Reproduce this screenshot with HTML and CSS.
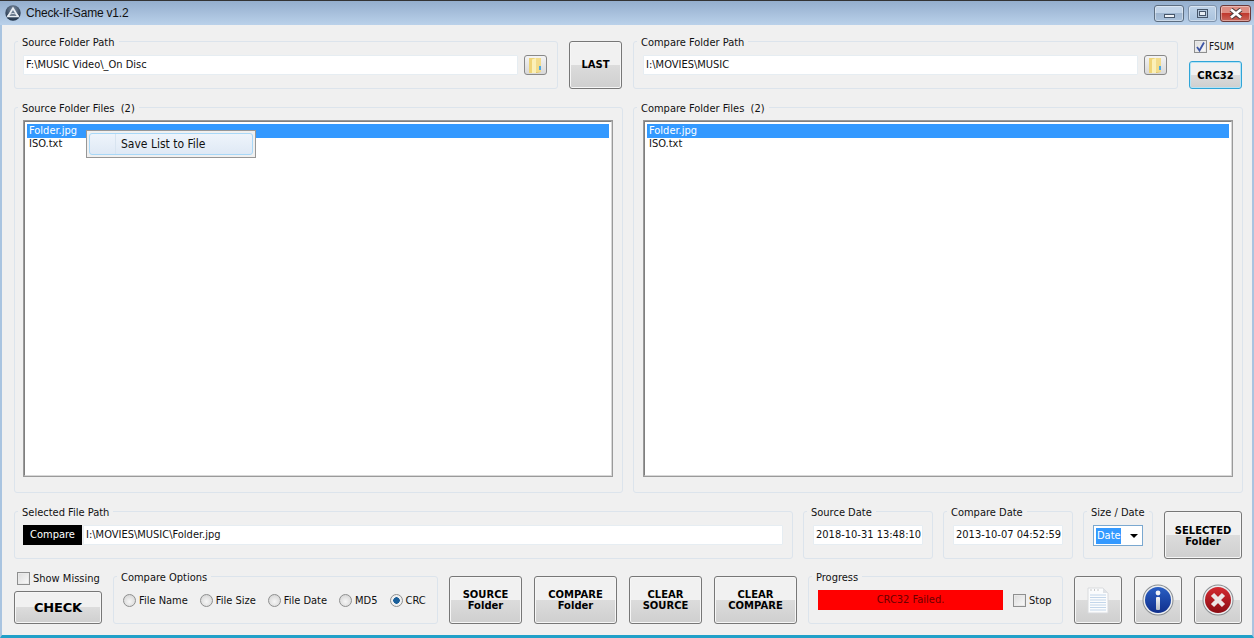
FILE: index.html
```html
<!DOCTYPE html>
<html lang="en">
<head>
<meta charset="utf-8">
<title>Check-If-Same v1.2</title>
<link rel="stylesheet" href="styles.css">
</head>
<body>
<div class="window">
  <header class="titlebar">
    <svg class="app-icon" viewBox="0 0 16 16"><defs><radialGradient id="ai" cx="50%" cy="30%" r="70%"><stop offset="0" stop-color="#7d8ea3"/><stop offset="1" stop-color="#1d2f45"/></radialGradient></defs><circle cx="8" cy="8" r="7.7" fill="url(#ai)"/><path d="M8 3.2 13 11.500H3Z" fill="none" stroke="#e8edf2" stroke-width="1.700"/><path d="M2.500 10.500C6 8 10 8 13.500 10.500" fill="none" stroke="#e8edf2" stroke-width="1"/></svg>
    <span class="title-text">Check-If-Same v1.2</span>
    <div class="win-controls">
      <div class="win-btn min"><span class="glyph-min"></span></div>
      <div class="win-btn max"><span class="glyph-max"></span></div>
      <div class="win-btn close"><svg class="glyph-x" viewBox="0 0 16 11"><path d="M3 1.500 13 9.500M13 1.500 3 9.500" stroke="#4a3a3a" stroke-width="4.600"/><path d="M3 1.500 13 9.500M13 1.500 3 9.500" stroke="#fff" stroke-width="2.800"/></svg></div>
    </div>
  </header>

  <main class="client">
    <section class="row row-paths">
      <div class="group path-group source">
        <span class="legend">Source Folder Path</span>
        <div class="field path-field">F:\MUSIC Video\_On Disc</div>
        <button class="folder-btn"><svg viewBox="0 0 13 16"><path d="M0 1h7l5 1.500V15l-5 1H0Z" fill="#e7c65a"/><path d="M7 1h5v14H7Z" fill="#f2dc8c"/><path d="M0 1h7v15H0Z" fill="#efd477"/><path d="M7 1 3 2.500V16h4Z" fill="#fbf0b8"/><path d="M11 9v4" stroke="#4fa9e0" stroke-width="2"/></svg></button>
      </div>
      <button class="btn last-btn">LAST</button>
      <div class="group path-group compare">
        <span class="legend">Compare Folder Path</span>
        <div class="field path-field">I:\MOVIES\MUSIC</div>
        <button class="folder-btn"><svg viewBox="0 0 13 16"><path d="M0 1h7l5 1.500V15l-5 1H0Z" fill="#e7c65a"/><path d="M7 1h5v14H7Z" fill="#f2dc8c"/><path d="M0 1h7v15H0Z" fill="#efd477"/><path d="M7 1 3 2.500V16h4Z" fill="#fbf0b8"/><path d="M11 9v4" stroke="#4fa9e0" stroke-width="2"/></svg></button>
      </div>
      <div class="crc-col">
        <label class="check fsum"><span class="box"><svg viewBox="0 0 11 11"><path d="M2 6 4.500 9.500 9 1.500" fill="none" stroke="#3d55a5" stroke-width="1.800"/></svg></span><span>FSUM</span></label>
        <button class="btn crc-btn">CRC32</button>
      </div>
    </section>

    <section class="row row-lists">
      <div class="group list-group source">
        <span class="legend">Source Folder Files&nbsp; (2)</span>
        <ul class="list">
          <li class="selected">Folder.jpg</li>
          <li>ISO.txt</li>
        </ul>
        <div class="context-menu"><div class="menu-item"><span class="menu-gutter"></span><span>Save List to File</span></div></div>
      </div>
      <div class="group list-group compare">
        <span class="legend">Compare Folder Files&nbsp; (2)</span>
        <ul class="list">
          <li class="selected">Folder.jpg</li>
          <li>ISO.txt</li>
        </ul>
      </div>
    </section>

    <section class="row row-selected">
      <div class="group selected-group">
        <span class="legend">Selected File Path</span>
        <div class="tag">Compare</div>
        <div class="field selected-field">I:\MOVIES\MUSIC\Folder.jpg</div>
      </div>
      <div class="group date-group">
        <span class="legend">Source Date</span>
        <div class="field date-field">2018-10-31 13:48:10</div>
      </div>
      <div class="group date-group">
        <span class="legend">Compare Date</span>
        <div class="field date-field">2013-10-07 04:52:59</div>
      </div>
      <div class="group size-group">
        <span class="legend">Size / Date</span>
        <div class="select"><span class="select-value">Date</span><span class="arrow"></span></div>
      </div>
      <button class="btn selected-btn">SELECTED<br>Folder</button>
    </section>

    <section class="row row-actions">
      <div class="check-col">
        <label class="check"><span class="box"></span><span>Show Missing</span></label>
        <button class="btn check-btn">CHECK</button>
      </div>
      <div class="group options-group">
        <span class="legend">Compare Options</span>
        <label class="radio"><span class="dot"></span>File Name</label>
        <label class="radio"><span class="dot"></span>File Size</label>
        <label class="radio"><span class="dot"></span>File Date</label>
        <label class="radio"><span class="dot"></span>MD5</label>
        <label class="radio"><span class="dot on"></span>CRC</label>
      </div>
      <button class="btn action-btn w73">SOURCE<br>Folder</button>
      <button class="btn action-btn w83">COMPARE<br>Folder</button>
      <button class="btn action-btn w73">CLEAR<br>SOURCE</button>
      <button class="btn action-btn w83">CLEAR<br>COMPARE</button>
      <div class="group progress-group">
        <span class="legend">Progress</span>
        <div class="progress-bar">CRC32 Failed.</div>
        <label class="check"><span class="box"></span><span>Stop</span></label>
      </div>
      <button class="btn icon-btn first"><svg class="doc" viewBox="0 0 22 27"><path d="M1 1h15l5 5v20H1Z" fill="#fbfcfd" stroke="#d8dadd"/><path d="M3 8h16M3 10.500h16M3 13h16M3 15.500h16M3 18h16M3 20.500h16M3 23h16" stroke="#c3d6ea"/><path d="M16 1v5h5Z" fill="#dfe2e6"/><path d="M3.500 3h1M7 3h1M10.500 3h1" stroke="#999"/></svg></button>
      <button class="btn icon-btn"><svg viewBox="0 0 32 32"><defs><linearGradient id="ib" x1="0" y1="0" x2="0" y2="1"><stop offset="0" stop-color="#2a5fc4"/><stop offset="1" stop-color="#102f8c"/></linearGradient><linearGradient id="ii" x1="0" y1="0" x2="0" y2="1"><stop offset="0" stop-color="#f4f6f8"/><stop offset="1" stop-color="#b8bec6"/></linearGradient></defs><circle cx="16" cy="16" r="15.500" fill="#8a8e92"/><circle cx="16" cy="16" r="14.500" fill="#eceef0"/><circle cx="16" cy="16" r="13" fill="url(#ib)"/><circle cx="16" cy="9" r="2.400" fill="#f0f3f7"/><rect x="14" y="13" width="4" height="13" rx="1" fill="url(#ii)"/></svg></button>
      <button class="btn icon-btn"><svg viewBox="0 0 32 32"><defs><linearGradient id="ir" x1="0" y1="0" x2="0" y2="1"><stop offset="0" stop-color="#d42a30"/><stop offset="1" stop-color="#8c0c14"/></linearGradient></defs><circle cx="16" cy="16" r="15.500" fill="#8a8e92"/><circle cx="16" cy="16" r="14.500" fill="#eceef0"/><circle cx="16" cy="16" r="13" fill="url(#ir)"/><path d="M10.500 10.500 21.500 21.500M21.500 10.500 10.500 21.500" stroke="#ece6e6" stroke-width="4.500"/></svg></button>
    </section>
  </main>
</div>
</body>
</html>
```

FILE: styles.css
```css
* { box-sizing: border-box; }
html, body { margin: 0; height: 100%; }
body { font-family: "DejaVu Sans Condensed", "DejaVu Sans", sans-serif; font-stretch: condensed; font-size: 11px; color: #111; overflow: hidden; }
.window { width: 1254px; height: 638px; display: flex; flex-direction: column; background: #f0f0f0; border: solid #a9c4e0; border-width: 0 2px 3px; border-bottom-color: #21a0c8; }
.titlebar { height: 25px; flex: none; display: flex; align-items: center; margin: 0 -2px; padding: 0 3px 0 5px; border-top: 1px solid #333; background: linear-gradient(#94aecd, #bad1ea); }
.app-icon { width: 16px; height: 16px; margin-right: 5px; }
.title-text { font-family: "Liberation Sans", sans-serif; font-size: 12px; letter-spacing: -.2px; color: #111; }
.win-controls { margin-left: auto; display: flex; align-self: flex-start; margin-top: 4px; }
.win-btn { width: 30px; height: 17px; margin-left: 4px; border: 1px solid #5c6d80; border-radius: 3px; background: linear-gradient(#c2d4e8 45%, #9fb6d0 50%, #aac2dc); display: flex; align-items: center; justify-content: center; box-shadow: inset 0 0 0 1px rgba(255,255,255,.4); }
.win-btn.max { border-color: #7f93ab; margin-left: 4px; width: 29px; background: linear-gradient(#bfd3e8, #a9c2dd); }
.win-btn.close { background: linear-gradient(#dd8d82 45%, #c0392e 50%, #c9665a); border-color: #6b3a3a; width: 31px; margin-left: 3px; }
.glyph-min { width: 11px; height: 4px; margin-top: 5px; background: #eef2f7; border: 1px solid #46566a; }
.glyph-max { width: 11px; height: 9px; border: 1px solid #46566a; background: #b4c8de; display: flex; align-items: center; justify-content: center; }
.glyph-max::after { content: ""; width: 5px; height: 3px; border: 1px solid #46566a; background: #e8eef5; }
.glyph-x { width: 16px; height: 11px; }

.client { flex: 1; display: flex; flex-direction: column; padding: 16px 9px 0 12px; }
.row { display: flex; flex: none; }
.row-paths { height: 48px; }
.row-lists { height: 386px; margin-top: 18px; gap: 10px; }
.row-selected { height: 48px; margin-top: 18px; }
.row-actions { height: 48px; margin-top: 17px; }

.group { position: relative; border: 1px solid #dce4ec; border-radius: 3px; }
.legend { position: absolute; top: -6px; left: 3px; padding: 0 4px; background: #f0f0f0; line-height: 13px; white-space: nowrap; }

.field { background: #fff; border: 1px solid #e6edf2; border-radius: 1px; height: 20px; line-height: 18px; padding-left: 2px; white-space: nowrap; }

.btn { font: bold 10px/11px "DejaVu Sans", sans-serif; color: #000; padding: 0; border: 1px solid #777; border-radius: 3px; background: linear-gradient(#f1f1f1 0 49%, #dcdcdc 50%, #cfcfcf); text-align: center; box-shadow: inset 0 0 0 1px #f6f6f6; flex: none; }

.path-group { display: flex; padding: 13px 0 0 9px; gap: 6px; }
.path-group.source { width: 544px; padding-left: 8px; }
.path-group.compare { width: 545px; margin-left: 11px; }
.path-field { width: 495px; }
.folder-btn { width: 23px; height: 20px; padding: 0; border: 1px solid #888; border-radius: 3px; background: linear-gradient(#f4f4f4, #d8d8d8); display: flex; align-items: center; justify-content: center; }
.folder-btn svg { width: 13px; height: 16px; display: block; }
.last-btn { width: 53px; height: 48px; margin-left: 11px; padding-bottom: 2px; }
.crc-col { margin-left: 11px; width: 53px; display: flex; flex-direction: column; align-items: flex-start; }
.crc-btn { width: 53px; height: 28px; margin-top: 8px; font-size: 10px; border-color: #2fa5d8; box-shadow: inset 0 0 0 1px #b5e3f5; }
.check { display: flex; align-items: center; gap: 3px; white-space: nowrap; }
.box { width: 13px; height: 13px; flex: none; border: 1px solid #8e8f8f; background: linear-gradient(135deg, #dcdcdc, #fafafa); box-shadow: inset 0 0 0 1px #e9e9e9; display: block; }
.box svg { display: block; width: 11px; height: 11px; }
.fsum { height: 13px; margin: -1px 0 0 5px; font-size: 10px; gap: 2px; }

.list-group { width: 609px; padding: 12px 0 0 8px; }
.list-group.compare { width: 610px; padding-left: 9px; }
.list { list-style: none; margin: 0; height: 357px; width: 590px; padding: 2px; border: 2px solid; border-color: #7f7f7f #d8d8d8 #d8d8d8 #7f7f7f; outline: 1px solid #9a9a9a; outline-offset: -1px; background: #fff; line-height: 13px; }
.list li { height: 13px; padding-left: 2px; }
.list .selected { background: #3399ff; color: #fff; height: 14px; margin-bottom: -1px; }
.list li:last-child { position: relative; }
.context-menu { position: absolute; left: 71px; top: 22px; width: 170px; height: 28px; padding: 2px; background: #f0f0f0; border: 1px solid #979797; font-size: 12px; }
.menu-item { height: 22px; display: flex; align-items: center; border: 1px solid #a8d8f8; border-radius: 3px; background: linear-gradient(#eef4fb, #dfe9f5); }
.menu-gutter { width: 26px; height: 100%; border-right: 1px solid #d8e4f0; margin-right: 5px; }

.selected-group { width: 779px; display: flex; padding: 13px 9px 0 8px; gap: 1px; }
.tag { width: 59px; height: 20px; background: #000; color: #fff; line-height: 19px; text-align: center; }
.selected-field { flex: 1; }
.date-group { width: 130px; margin-left: 10px; padding: 13px 9px 0; }
.size-group { width: 70px; margin-left: 10px; padding: 13px 9px 0; }
.select { width: 50px; height: 21px; background: #fff; border: 1px solid #7aa8d0; display: flex; align-items: center; padding-left: 2px; }
.select-value { width: 25px; background: #3399ff; color: #fff; line-height: 16px; padding-left: 1px; }
.arrow { margin-left: auto; margin-right: 4px; border: 4px solid transparent; border-top: 4px solid #000; border-bottom: 0; }
.selected-btn { width: 78px; height: 48px; margin-left: 11px; padding-top: 2px; }

.check-col { width: 88px; flex: none; display: flex; flex-direction: column; margin-top: -5px; }
.check-col .check { margin-left: 3px; height: 14px; flex: none; }
.check-btn { height: 33px; margin-top: 6px; font-size: 13px; letter-spacing: -.2px; }
.options-group { width: 325px; margin-left: 11px; display: flex; align-items: center; padding: 0 0 0 9px; }
.radio { display: flex; align-items: center; gap: 3px; margin-right: 12px; white-space: nowrap; }
.dot { width: 13px; height: 13px; flex: none; border-radius: 50%; border: 1px solid #8e8f8f; background: radial-gradient(circle at 50% 60%, #f6f6f6, #cfcfcf); }
.dot.on { background: radial-gradient(circle, #1a5f9a 0 3px, #f0f0f0 3.500px); }
.action-btn { height: 48px; margin-left: 12px; }
.w73 { width: 73px; }
.w83 { width: 83px; }
.options-group + .action-btn { margin-left: 11px; }
.progress-group { width: 255px; margin-left: 11px; display: flex; align-items: center; padding: 0 0 0 9px; gap: 10px; }
.progress-bar { width: 185px; height: 20px; background: #f00; color: #6b0000; line-height: 20px; text-align: center; }
.icon-btn { width: 48px; height: 48px; margin-left: 12px; display: flex; align-items: center; justify-content: center; }
.icon-btn.first { margin-left: 11px; }
.icon-btn svg { width: 32px; height: 32px; }
.icon-btn svg.doc { width: 22px; height: 27px; }
```
